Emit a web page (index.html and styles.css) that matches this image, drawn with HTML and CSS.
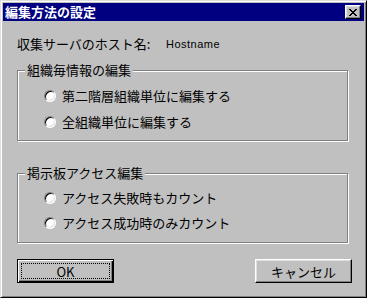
FILE: index.html
```html
<!DOCTYPE html>
<html lang="ja">
<head>
  <meta charset="utf-8">
  <link rel="stylesheet" href="styles.css">
</head>
<body>
  <div class="dialog">
    <div class="titlebar">
      <span class="title">編集方法の設定</span>
      <button class="close" type="button">
        <svg width="8" height="7" viewBox="0 0 8 7" shape-rendering="crispEdges">
          <path d="M0 0h2v1h-2zM6 0h2v1h-2zM1 1h2v1h-2zM5 1h2v1h-2zM2 2h4v1h-4zM3 3h2v1h-2zM2 4h4v1h-4zM1 5h2v1h-2zM5 5h2v1h-2zM0 6h2v1h-2zM6 6h2v1h-2z" fill="#000"/>
        </svg>
      </button>
    </div>

    <div class="content">
      <div class="host-row">
        <span class="host-label">収集サーバのホスト名:</span>
        <span class="host-name">Hostname</span>
      </div>

      <div class="group group-org">
        <span class="group-title">組織毎情報の編集</span>
        <label class="option"><span class="radio"></span>第二階層組織単位に編集する</label>
        <label class="option"><span class="radio"></span>全組織単位に編集する</label>
      </div>

      <div class="group group-board">
        <span class="group-title">掲示板アクセス編集</span>
        <label class="option"><span class="radio"></span>アクセス失敗時もカウント</label>
        <label class="option"><span class="radio"></span>アクセス成功時のみカウント</label>
      </div>

      <div class="buttons">
        <button class="btn btn-default" type="button">OK</button>
        <button class="btn" type="button">キャンセル</button>
      </div>
    </div>
  </div>
</body>
</html>
```

FILE: styles.css
```css
* {
  box-sizing: border-box;
}

body {
  margin: 0;
  background: #c0c0c0;
  font-family: "Noto Sans CJK JP", sans-serif;
  font-size: 13px;
  color: #000;
}

.dialog {
  width: 367px;
  height: 298px;
  padding: 2px;
  background: #c0c0c0;
  border: 1px solid;
  border-color: #dfdfdf #000 #000 #dfdfdf;
  box-shadow: inset 1px 1px #fff, inset -1px -1px #808080;
  display: flex;
  flex-direction: column;
}

.titlebar {
  height: 18px;
  background: #000080;
  display: flex;
  align-items: center;
  padding: 0 3px 0 2px;
}

.title {
  color: #fff;
  font-weight: bold;
  line-height: 18px;
}

.close {
  margin-left: auto;
  width: 16px;
  height: 14px;
  padding: 0;
  background: #c0c0c0;
  border: 1px solid;
  border-color: #fff #000 #000 #fff;
  box-shadow: inset -1px -1px #808080, inset 1px 1px #dfdfdf;
  display: flex;
  align-items: center;
  justify-content: center;
}

.close svg {
  display: block;
  margin-left: -1px;
}

.content {
  display: flex;
  flex-direction: column;
  padding: 15px 0 0 14px;
}

.host-row {
  display: flex;
  align-items: center;
  height: 16px;
  line-height: 16px;
  padding-left: 0;
}

.host-label {
  width: 149px;
}

.host-name {
  font-family: "Liberation Sans", Arial, sans-serif;
  font-size: 11px;
  letter-spacing: 0.5px;
}

.group {
  width: 331px;
  border: 1px solid #808080;
  box-shadow: 1px 1px #fff, inset 1px 1px #fff;
  display: flex;
  flex-direction: column;
}

.group-title {
  align-self: flex-start;
  margin: -9px 0 0 7px;
  padding: 0 2px;
  line-height: 16px;
  background: #c0c0c0;
}

.group-org {
  margin-top: 18px;
  padding-bottom: 5px;
}

.group-org .option:first-of-type {
  margin-top: 5px;
}

.group-board {
  margin-top: 32px;
  padding-bottom: 7px;
}

.group-board .option {
  height: 25px;
}

.group-board .option:first-of-type {
  margin-top: 4px;
}

.option {
  display: flex;
  align-items: center;
  gap: 6px;
  height: 26px;
  padding-left: 26px;
  line-height: 16px;
}

.radio {
  width: 12px;
  height: 12px;
  border-radius: 50%;
  background: #fff;
  border: 1px solid;
  border-color: #808080 #fff #fff #808080;
  box-shadow: inset 1px 1px #000, inset -1px -1px #dfdfdf;
  flex: none;
}

.buttons {
  width: 335px;
  margin-top: 16px;
  display: flex;
  justify-content: space-between;
}

.btn {
  width: 97px;
  height: 24px;
  padding: 0;
  background: #c0c0c0;
  font-family: "Noto Sans CJK JP", sans-serif;
  font-size: 13px;
  color: #000;
  border: 1px solid;
  border-color: #fff #000 #000 #fff;
  box-shadow: inset -1px -1px #808080, inset 1px 1px #dfdfdf;
}

.btn-default {
  border-color: #000;
  box-shadow: inset 1px 1px #fff, inset -1px -1px #000, inset -2px -2px #808080;
  outline: 1px dotted #000;
  outline-offset: -5px;
}
```
